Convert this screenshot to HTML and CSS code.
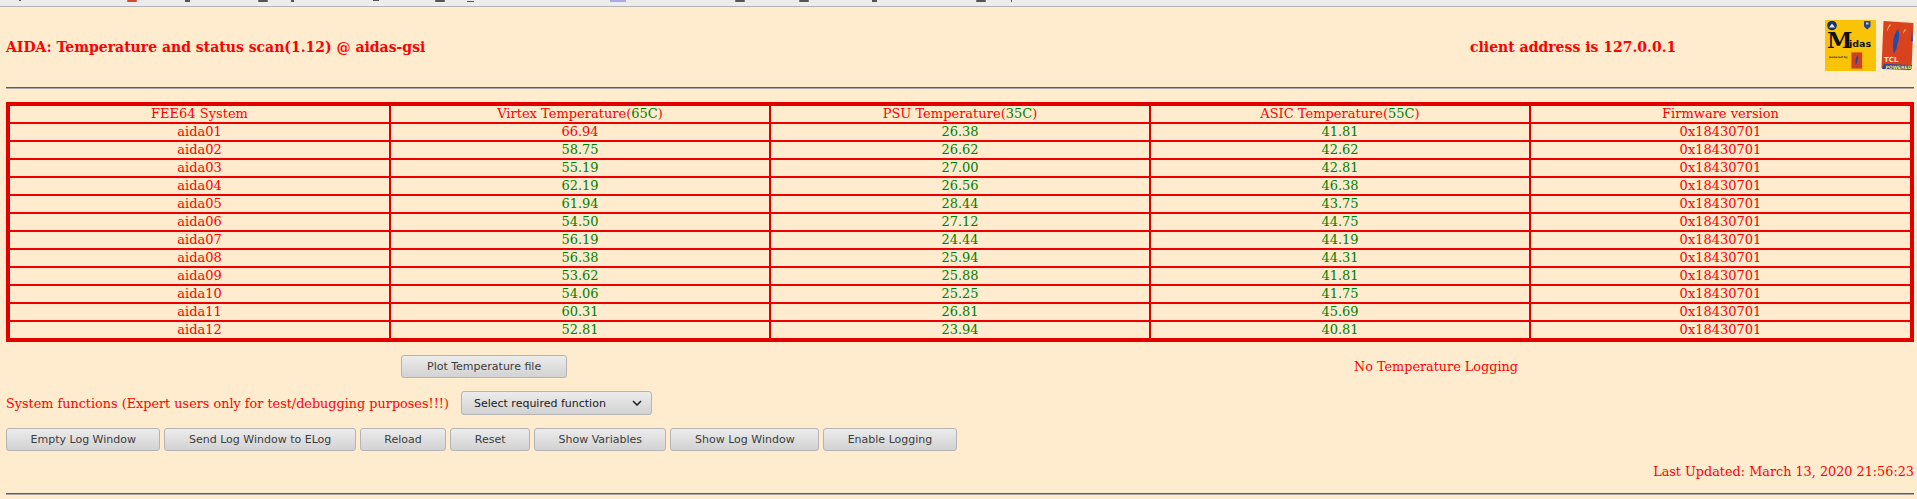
FILE: index.html
```html
<!DOCTYPE html>
<html lang="en">
<head>
<meta charset="utf-8">
<title>AIDA Temperature and status scan</title>
<link rel="stylesheet" href="styles.css">
</head>
<body>
<div class="browser-strip">
  <svg class="strip-bits" width="1917" height="6" viewBox="0 0 1917 6">
    <rect x="127" y="0" width="10" height="2" rx="1" fill="#d9482c"/>
    <rect x="610" y="0" width="16" height="2" fill="#a9a9e8"/>
    <g fill="#555">
      <rect x="19" y="0" width="2" height="1"/>
      <rect x="185" y="0" width="5" height="2"/>
      <rect x="258" y="0" width="10" height="2" rx="1"/>
      <rect x="291" y="0" width="3" height="2"/>
      <rect x="373" y="0" width="6" height="1"/>
      <rect x="435" y="0" width="10" height="2" rx="1"/>
      <rect x="467" y="1" width="7" height="1"/>
      <rect x="735" y="0" width="10" height="2" rx="1"/>
      <rect x="799" y="0" width="10" height="2" rx="1"/>
      <rect x="872" y="0" width="5" height="2"/>
      <rect x="976" y="0" width="10" height="2" rx="1"/>
      <rect x="1011" y="0" width="1" height="2"/>
    </g>
  </svg>
</div>
<main class="page">
  <header class="top">
    <h1 class="title title-left">AIDA: Temperature and status scan(1.12) @ aidas-gsi</h1>
    <h1 class="title title-mid">client address is 127.0.0.1</h1>
    <div class="logos">
      <svg class="logo" width="51" height="51" viewBox="0 0 51 51">
        <rect width="51" height="51" fill="#f9c408"/>
        <circle cx="7" cy="5.500" r="4.800" fill="#17336f"/>
        <path d="M4 7.500l3-4 3 4z" fill="#e8e8f0"/>
        <path d="M39 1h6.500v5.500l-3.250 3-3.250-3z" fill="#2a4390"/>
        <path d="M41 2.500h2.500v2h-2.500z" fill="#c8c8c0"/>
        <text class="m-big" x="2" y="28">M</text>
        <text class="m-rest" x="24" y="27">idas</text>
        <text class="m-tiny" x="4" y="37.500">powered by</text>
        <rect x="25.500" y="31.500" width="12.500" height="18" fill="#f1b010"/>
        <rect x="26.500" y="32.500" width="10.500" height="16" fill="#cf4020"/>
        <path d="M32.500 35c-2 3-2.500 6-1.500 10 1.500-3 2.500-6 1.500-10z" fill="#1d4a9e"/>
      </svg>
      <svg class="logo" width="33" height="51" viewBox="0 0 33 51">
        <path d="M2.500 1l30 2-2 46-30-1z" fill="#d8421c"/>
        <path d="M17 9c-5 6-6 16-4 25 1-3 3-5 3-9 2-5 3-11 1-16z" fill="#1e4db0"/>
        <path d="M9 4c-2 2-3 5-3 8 1-3 2-5 4-7zM24 9c-1 1-2 3-2 5 1-2 2-3 3-4z" fill="#f0b060"/>
        <path d="M31 9l1 12-2 0z" fill="#2050b0"/>
        <text class="tcl-name" x="3" y="42">TCL</text>
        <path d="M3 44l28 1-1 5-29-1z" fill="#1f4aa8"/>
        <text class="tcl-power" x="4.500" y="48.700">POWERED</text>
      </svg>
    </div>
  </header>
  <hr class="rule">
  <table class="scan">
    <thead>
      <tr><th>FEE64 System</th><th>Virtex Temperature(<span class="ok">65C</span>)</th><th>PSU Temperature(<span class="ok">35C</span>)</th><th>ASIC Temperature(<span class="ok">55C</span>)</th><th>Firmware version</th></tr>
    </thead>
    <tbody>
      <tr><td>aida01</td><td>66.94</td><td class="ok">26.38</td><td class="ok">41.81</td><td>0x18430701</td></tr>
      <tr><td>aida02</td><td class="ok">58.75</td><td class="ok">26.62</td><td class="ok">42.62</td><td>0x18430701</td></tr>
      <tr><td>aida03</td><td class="ok">55.19</td><td class="ok">27.00</td><td class="ok">42.81</td><td>0x18430701</td></tr>
      <tr><td>aida04</td><td class="ok">62.19</td><td class="ok">26.56</td><td class="ok">46.38</td><td>0x18430701</td></tr>
      <tr><td>aida05</td><td class="ok">61.94</td><td class="ok">28.44</td><td class="ok">43.75</td><td>0x18430701</td></tr>
      <tr><td>aida06</td><td class="ok">54.50</td><td class="ok">27.12</td><td class="ok">44.75</td><td>0x18430701</td></tr>
      <tr><td>aida07</td><td class="ok">56.19</td><td class="ok">24.44</td><td class="ok">44.19</td><td>0x18430701</td></tr>
      <tr><td>aida08</td><td class="ok">56.38</td><td class="ok">25.94</td><td class="ok">44.31</td><td>0x18430701</td></tr>
      <tr><td>aida09</td><td class="ok">53.62</td><td class="ok">25.88</td><td class="ok">41.81</td><td>0x18430701</td></tr>
      <tr><td>aida10</td><td class="ok">54.06</td><td class="ok">25.25</td><td class="ok">41.75</td><td>0x18430701</td></tr>
      <tr><td>aida11</td><td class="ok">60.31</td><td class="ok">26.81</td><td class="ok">45.69</td><td>0x18430701</td></tr>
      <tr><td>aida12</td><td class="ok">52.81</td><td class="ok">23.94</td><td class="ok">40.81</td><td>0x18430701</td></tr>
    </tbody>
  </table>
  <div class="plot-row">
    <div class="plot-cell"><button class="btn btn-plot" type="button">Plot Temperature file</button></div>
    <div class="plot-status">No Temperature Logging</div>
  </div>
  <div class="func-row">
    <span>System functions (Expert users only for test/debugging purposes!!!)</span>
    <button class="btn select" type="button">Select required function
      <svg width="10" height="6" viewBox="0 0 10 6"><path d="M1 1l4 4 4-4" fill="none" stroke="#222" stroke-width="1.600"/></svg>
    </button>
  </div>
  <div class="btn-row">
    <button class="btn" type="button">Empty Log Window</button>
    <button class="btn" type="button">Send Log Window to ELog</button>
    <button class="btn" type="button">Reload</button>
    <button class="btn" type="button">Reset</button>
    <button class="btn" type="button">Show Variables</button>
    <button class="btn" type="button">Show Log Window</button>
    <button class="btn" type="button">Enable Logging</button>
  </div>
  <div class="updated">Last Updated: March 13, 2020 21:56:23</div>
  <hr class="rule">
</main>
</body>
</html>
```
FILE: styles.css
```css
html, body {
  margin: 0;
  height: 499px;
  overflow: hidden;
  background: #ffebcd;
}
body {
  font-family: "DejaVu Serif", serif;
  font-size: 12.800px;
  color: #ff0000;
}
.browser-strip {
  height: 6px;
  background: #ececec;
  border-bottom: 1px solid #b4b4b4;
}
.strip-bits { display: block; }
.page {
  padding: 0 3px 0 6px;
}
.top {
  display: flex;
  align-items: center;
  height: 80px;
}
.title {
  margin: 0;
  font-size: 14px;
  font-weight: bold;
}
.title-left { width: 1464px; }
.title-mid { width: 355px; }
.logos {
  display: flex;
  gap: 5px;
  align-self: flex-start;
  padding-top: 13px;
}
.logo { display: block; }
.m-big {
  font-family: "DejaVu Serif", serif;
  font-size: 23px;
  font-weight: bold;
  fill: #111;
}
.m-rest {
  font-family: "DejaVu Sans", sans-serif;
  font-size: 9.500px;
  font-weight: bold;
  fill: #111;
}
.m-tiny {
  font-family: "DejaVu Sans", sans-serif;
  font-size: 2.800px;
  font-weight: bold;
  fill: #3a3010;
}
.tcl-name {
  font-family: "DejaVu Sans", sans-serif;
  font-size: 7px;
  font-weight: bold;
  fill: #f6e6d0;
}
.tcl-power {
  font-family: "DejaVu Sans", sans-serif;
  font-size: 4.600px;
  font-weight: bold;
  fill: #f5e850;
}
.rule {
  margin: 0;
  height: 0;
  border: 0;
  border-top: 1px solid #5e5e5e;
  border-bottom: 1px solid #a8a8a8;
}
.scan {
  width: 1908px;
  margin-top: 13px;
  border-collapse: separate;
  border-spacing: 0;
  border: 4px solid #e00000;
  table-layout: fixed;
  text-align: center;
  font-size: 13px;
  line-height: 16px;
}
.scan th, .scan td {
  padding: 0;
  height: 16px;
  font-weight: normal;
  border-left: 2px solid #d80000;
  border-top: 2px solid #ee0000;
}
.scan th:first-child, .scan td:first-child { border-left: 0; width: 379px; }
.scan th:nth-child(n+2):nth-child(-n+4) { width: 378px; }
.scan thead th { border-top: 0; }
.ok { color: #008000; }
.plot-row {
  display: flex;
  margin-top: 13px;
  height: 23px;
  align-items: center;
}
.plot-cell { width: 1348px; padding-left: 395px; box-sizing: border-box; }
.plot-status { white-space: nowrap; }
.btn {
  font-family: "DejaVu Sans", sans-serif;
  font-size: 11px;
  height: 23px;
  padding: 0 23.500px;
  color: #3c3c3c;
  background: linear-gradient(#ececec, #d2d2d2);
  border: 1px solid #b4b4b4;
  border-radius: 3px;
  white-space: nowrap;
}
.btn-plot { padding: 0 25px; }
.func-row {
  display: flex;
  align-items: center;
  gap: 12px;
  margin-top: 13px;
  height: 24px;
}
.select {
  height: 24px;
  width: 191px;
  display: flex;
  align-items: center;
  justify-content: space-between;
  padding: 0 9px 0 12px;
  color: #1a1a1a;
}
.btn-row {
  display: flex;
  gap: 4px;
  margin-top: 13px;
}
.updated {
  text-align: right;
  margin-top: 13px;
  line-height: 16px;
}
.page > .rule:last-child { margin-top: 13px; }
```
